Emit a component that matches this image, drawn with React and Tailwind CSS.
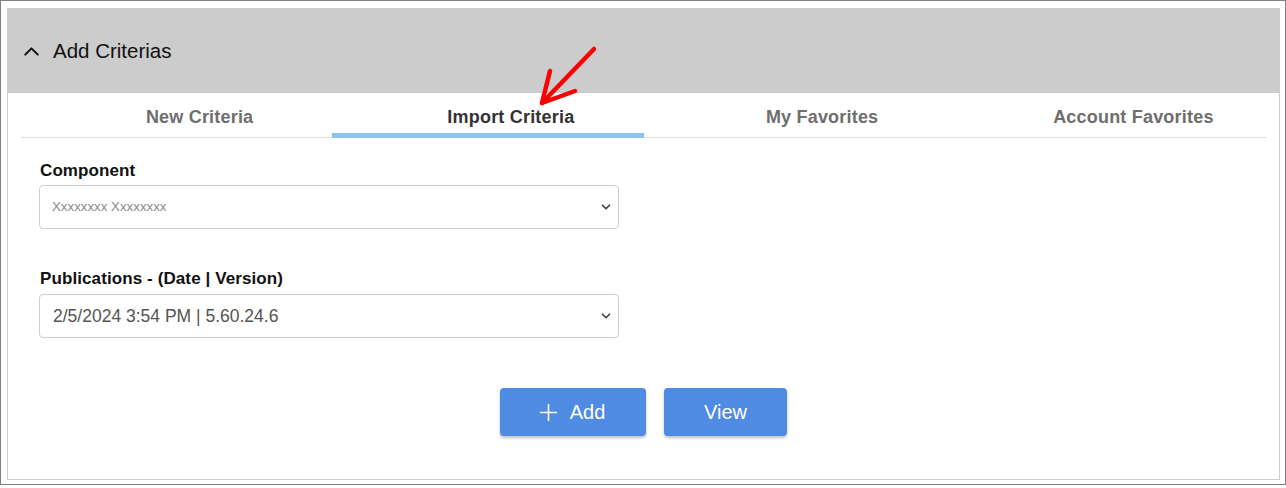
import { ChevronUp, ChevronDown, Plus } from "lucide-react";

const tabs = ["New Criteria", "Import Criteria", "My Favorites", "Account Favorites"];

const SelectBox = ({ children, small }) => (
  <div className="h-[44px] w-[580px] border border-[#cfcfcf] rounded-[4px] flex items-center justify-between pl-[12px] pr-[5px]">
    {small ? (
      <span className="text-[13.3px] text-[#8a8a8a]">{children}</span>
    ) : (
      <span className="pl-[1px] text-[17.5px] text-[#555]">{children}</span>
    )}
    <ChevronDown size={14} strokeWidth={3} className="text-[#444]" />
  </div>
);

export default function App() {
  return (
    <div className="w-[1286px] h-[485px] border border-[#808080] pt-[7px] pl-[6px] pr-[5px] pb-[4px] bg-white relative font-['Liberation_Sans',Arial,sans-serif]">
      <div className="h-full border border-[#cccccc] flex flex-col">
        {/* Header */}
        <div className="h-[84px] bg-[#cccccc] flex items-center pl-[11px] gap-[9px]">
          <ChevronUp size={25} strokeWidth={2} className="text-[#111]" />
          <span className="text-[20.5px] text-[#111]">Add Criterias</span>
        </div>

        {/* Tabs */}
        <div className="mx-[13px] border-b border-[#dddddd] grid grid-cols-4 h-[45px]">
          {tabs.map((t, i) => (
            <div key={t} className="relative flex items-center justify-center pt-[4px] pl-[46px]">
              <span
                className={
                  i === 1
                    ? "text-[18px] tracking-[0.2px] font-bold text-[#333]"
                    : "text-[18px] tracking-[0.2px] font-bold text-[#6e6e6e]"
                }
              >
                {t}
              </span>
              {i === 1 && <div className="absolute left-0 right-0 bottom-[-1px] h-[5px] bg-[#88c5ef]" />}
            </div>
          ))}
        </div>

        {/* Form */}
        <div className="px-[31px] pt-[21px] flex flex-col">
          <label className="text-[17px] leading-[24px] tracking-[0.1px] font-bold text-[#111] pl-[1px]">Component</label>
          <div className="mt-[2px]">
            <SelectBox small>Xxxxxxxx Xxxxxxxx</SelectBox>
          </div>

          <label className="mt-[38px] text-[17px] leading-[24px] tracking-[0.1px] font-bold text-[#111] pl-[1px]">
            Publications - (Date | Version)
          </label>
          <div className="mt-[3px]">
            <SelectBox>2/5/2024 3:54 PM | 5.60.24.6</SelectBox>
          </div>
        </div>

        {/* Buttons */}
        <div className="mt-[50px] flex justify-center gap-[18px]">
          <button className="w-[146px] h-[48px] rounded-[4px] bg-[#4f8ae3] text-white text-[20px] flex items-center justify-center gap-[8px] pr-[6px] shadow-[0_2px_3px_rgba(0,0,0,0.25)]">
            <Plus size={27} strokeWidth={1.4} />
            Add
          </button>
          <button className="w-[123px] h-[48px] rounded-[4px] bg-[#4f8ae3] text-white text-[20px] flex items-center justify-center shadow-[0_2px_3px_rgba(0,0,0,0.25)]">
            View
          </button>
        </div>
      </div>

      {/* Red annotation arrow */}
      <svg className="absolute left-[530px] top-[40px]" width="75" height="75" viewBox="0 0 75 75">
        <g stroke="#ff0000" strokeWidth="4.5" strokeLinecap="round" strokeLinejoin="round" fill="none">
          <path d="M63 8 L11 62" />
          <path d="M19 30 L11 62 L44 50" />
        </g>
      </svg>
    </div>
  );
}
